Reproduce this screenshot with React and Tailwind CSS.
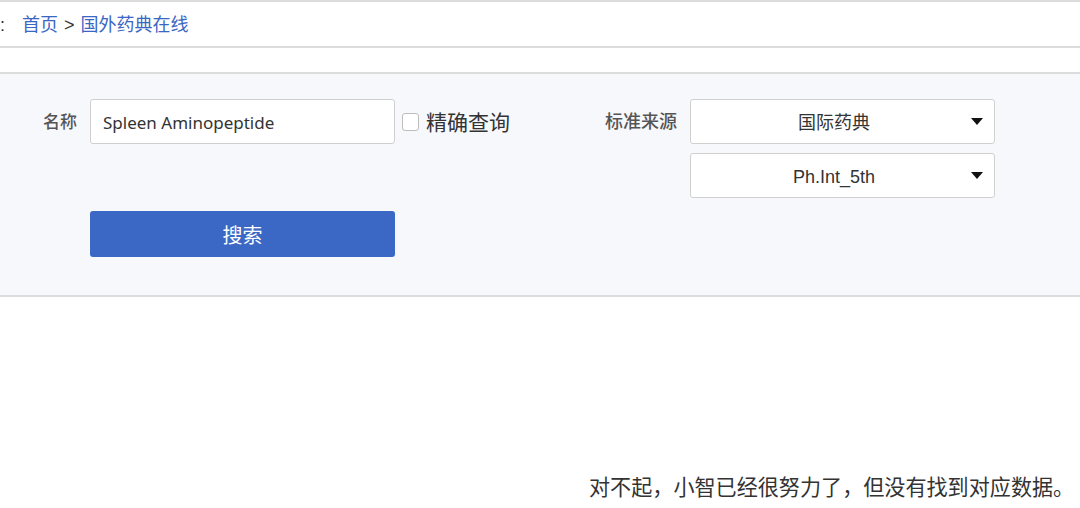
import React from "react";

const F = { fontFamily: '"Liberation Sans", "Noto Sans CJK SC", sans-serif' };

function Select({ value }) {
  return (
    <div className="flex h-[45px] w-[305px] items-center rounded-[3px] border border-[#d0d0d0] bg-white">
      <div className="flex-1 pl-[14px] pt-[3px] text-center text-[18px] text-[#333]">{value}</div>
      <svg width="12" height="7" viewBox="0 0 12 7" className="mr-[11px] ml-[8px]">
        <path d="M0 0 L12 0 L6 7 Z" fill="#111" />
      </svg>
    </div>
  );
}

export default function App() {
  return (
    <div className="w-[1080px] h-[508px] overflow-hidden bg-white" style={F}>
      {/* breadcrumb */}
      <div className="flex h-[48px] items-center border-t-2 border-b-2 border-[#dcdcdc] pt-[3px] text-[18px]">
        <span className="text-[#333]">:</span>
        <span className="ml-[17px] text-[#3a66c4]">首页</span>
        <span className="mx-[6px] text-[#333]">&gt;</span>
        <span className="text-[#3a66c4]">国外药典在线</span>
      </div>
      <div className="h-[24px]" />
      {/* search panel */}
      <div className="h-[225px] border-t-2 border-b-2 border-[#dcdcdc] bg-[#f7f8fc] pt-[25px]">
        <div className="flex">
          <div className="w-[600px]">
            <div className="flex items-center">
              <div className="w-[77px] pt-[2px] text-right text-[17px] font-medium text-[#555]">名称</div>
              <div className="ml-[13px] flex h-[45px] w-[305px] items-center rounded-[3px] border border-[#cfcfcf] bg-white pl-[12px] pt-[2px] text-[17px] text-[#333]" style={{ fontFamily: '"Noto Sans", "Liberation Sans", sans-serif' }}>
                Spleen Aminopeptide
              </div>
              <div className="ml-[7px] h-[18px] w-[17px] rounded-[3px] border border-[#bdbdbd] bg-white" />
              <div className="ml-[7px] pt-[2px] text-[21px] text-[#333]">精确查询</div>
            </div>
            <div className="ml-[90px] mt-[67px] flex h-[46px] w-[305px] items-center justify-center rounded-[3px] bg-[#3b67c5] pt-[3px] text-[20px] text-white">
              搜索
            </div>
          </div>
          <div className="flex">
            <div className="flex h-[45px] w-[77px] items-center justify-end pt-[2px] text-[18px] font-medium text-[#555]">标准来源</div>
            <div className="ml-[13px] flex flex-col gap-[9px]">
              <Select value="国际药典" />
              <Select value="Ph.Int_5th" />
            </div>
          </div>
        </div>
      </div>
      <div className="pl-[589px] pt-[177px] text-[21.1px] leading-[28px] text-[#333] whitespace-nowrap">
        对不起，小智已经很努力了，但没有找到对应数据。
      </div>
    </div>
  );
}
